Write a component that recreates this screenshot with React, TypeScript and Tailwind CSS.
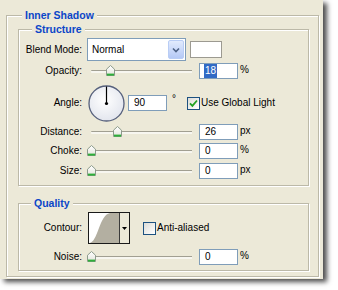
import React from "react";

const font = "font-['Liberation_Sans',Arial,sans-serif]";

const Thumb: React.FC = () => (
  <svg width="9" height="11" viewBox="0 0 9 11">
    <defs>
      <linearGradient id="tg" x1="0" y1="0" x2="0" y2="1">
        <stop offset="0" stopColor="#ffffff" />
        <stop offset="1" stopColor="#e4e4dc" />
      </linearGradient>
    </defs>
    <path d="M0.5 4.2 L4.5 0.5 L8.5 4.2 L8.5 10.5 L0.5 10.5 Z" fill="url(#tg)" stroke="#8c9a8c" />
    <rect x="1" y="8.6" width="7" height="2" fill="#2fae3a" />
  </svg>
);

const Slider: React.FC<{ at: number }> = ({ at }) => (
  <div className="relative w-[105px] h-[12px] shrink-0">
    <div className="absolute left-[4px] right-0 top-[5px] h-[3px] border-t border-[#a19f92] bg-[#f7f6f0] rounded-l-[1px]" />
    <div className="absolute top-0" style={{ left: at }}>
      <Thumb />
    </div>
  </div>
);

const Field: React.FC<{ value: string; selected?: boolean; unit?: string }> = ({ value, selected, unit }) => (
  <>
    <div className="w-[39px] h-[16px] shrink-0 border border-[#7f9db9] bg-white flex items-center pl-[4px] text-[10px] leading-[12px]">
      {selected ? (
        <span className="bg-[#316ac5] text-white px-[1px] h-[14px] leading-[14px]">{value}</span>
      ) : (
        <span className="px-[1px]">{value}</span>
      )}
    </div>
    {unit && <span className="ml-[2px] -mt-[2px] text-[10px] leading-[12px]">{unit}</span>}
  </>
);

const Label: React.FC<{ children: React.ReactNode }> = ({ children }) => (
  <span className="w-[63px] shrink-0 text-right text-[10px] leading-[12px]">{children}</span>
);

const SliderRow: React.FC<{ label: string; at: number; value: string; unit: string; selected?: boolean; className?: string }> = ({
  label,
  at,
  value,
  unit,
  selected,
  className,
}) => (
  <div className={`flex items-center h-[16px] ${className ?? ""}`}>
    <Label>{label}</Label>
    <div className="ml-[5px]">
      <Slider at={at} />
    </div>
    <div className="ml-[7px] flex items-center h-[16px]">
      <Field value={value} selected={selected} unit={unit} />
    </div>
  </div>
);

// group box caption sits on the top border line; indent is a plain spacer
const Caption: React.FC<{ children: React.ReactNode; indent: number }> = ({ children, indent }) => (
  <div className="-mt-[7px] flex h-[12px]">
    <div className="shrink-0" style={{ width: indent }} />
    <div className="px-[3px] bg-[#ece9d8] text-[10.5px] leading-[12px] font-bold text-[#0b46c8] whitespace-nowrap">{children}</div>
  </div>
);

const box = "border border-[#bcb9a8] shadow-[inset_1px_1px_0_#ffffff,1px_1px_0_#ffffff]";

export default function App() {
  return (
    <div className={`w-[338px] h-[290px] bg-white overflow-hidden text-black ${font}`}>
      <div className="w-[323px] h-[279px] bg-[#ece9d8] shadow-[4px_3px_5px_rgba(0,0,0,0.7)] pl-[6px] pt-[15px]">
        <div className={`w-[313px] h-[262px] ${box}`}>
          <Caption indent={15}>Inner Shadow</Caption>

          <div className={`mt-[8px] ml-[11px] w-[291px] h-[157px] ${box}`}>
            <Caption indent={13}>Structure</Caption>

            <div className="flex items-center h-[23px] mt-[3px]">
              <Label>Blend Mode:</Label>
              <div className="ml-[5px] w-[99px] h-[23px] border border-[#7f9db9] bg-white flex items-center p-[1px]">
                <span className="flex-1 pl-[3px] text-[10px] leading-[12px]">Normal</span>
                <div className="w-[16px] h-full rounded-[2px] border border-[#b9cdf5] bg-gradient-to-b from-[#e2ebfd] to-[#b5c9f6] flex items-center justify-center">
                  <svg width="8" height="6" viewBox="0 0 8 6">
                    <path d="M1 1.5 L4 4.5 L7 1.5" fill="none" stroke="#4d6185" strokeWidth="1.6" />
                  </svg>
                </div>
              </div>
              <div className="ml-[4px] w-[32px] h-[17px] border border-[#9c9a91] bg-white" />
            </div>

            <SliderRow className="mt-[2px]" label="Opacity:" at={19} value="18" unit="%" selected />

            <div className="flex items-center h-[38px] mt-[5px]">
              <Label>Angle:</Label>
              <div className="ml-[6px] w-[37px] h-[37px] shrink-0">
                <svg width="37" height="37" viewBox="0 0 37 37">
                  <defs>
                    <radialGradient id="dg" cx="0.45" cy="0.4" r="0.6">
                      <stop offset="0" stopColor="#ffffff" />
                      <stop offset="1" stopColor="#e3e6ee" />
                    </radialGradient>
                  </defs>
                  <circle cx="18.5" cy="18.5" r="17.5" fill="url(#dg)" stroke="#56607c" strokeWidth="1.3" />
                  <line x1="18.5" y1="18.5" x2="18.5" y2="1.5" stroke="#000" strokeWidth="1.2" />
                  <circle cx="18.5" cy="18.5" r="1.6" fill="#000" />
                </svg>
              </div>
              <div className="ml-[3px] flex items-center h-[16px]">
                <Field value="90" />
              </div>
              <span className="ml-[5px] self-start mt-[10px] text-[10px] leading-[10px]">°</span>
              <div className="ml-[11px] w-[13px] h-[13px] border border-[#1c5180] bg-gradient-to-br from-[#dcdcd7] to-white flex items-center justify-center">
                <svg width="9" height="9" viewBox="0 0 9 9">
                  <path d="M1 4.3 L3.4 6.8 L8 1.5" fill="none" stroke="#21a121" strokeWidth="1.8" />
                </svg>
              </div>
              <span className="ml-[1px] text-[10px] leading-[12px]">Use Global Light</span>
            </div>

            <SliderRow className="mt-[2px]" label="Distance:" at={26} value="26" unit="px" />
            <SliderRow className="mt-[3px]" label="Choke:" at={0} value="0" unit="%" />
            <SliderRow className="mt-[4px]" label="Size:" at={0} value="0" unit="px" />
          </div>

          <div className={`mt-[17px] ml-[11px] w-[291px] h-[68px] ${box}`}>
            <Caption indent={12}>Quality</Caption>

            <div className="flex items-center h-[32px] mt-[3px]">
              <Label>Contour:</Label>
              <div className="ml-[6px] w-[42px] h-[32px] border border-[#1a1a1a] bg-white flex">
                <svg width="30" height="30" viewBox="0 0 30 30" className="shrink-0">
                  <path d="M0 30 C 9 30, 10 2, 21 0 L 30 0 L 30 30 Z" fill="#b3afa1" />
                </svg>
                <div className="flex-1 border-l border-[#3a3a3a] bg-[#ece9d8] flex items-center justify-center">
                  <svg width="5" height="3" viewBox="0 0 5 3">
                    <path d="M0 0 H5 L2.5 3 Z" fill="#000" />
                  </svg>
                </div>
              </div>
              <div className="ml-[13px] w-[13px] h-[13px] border border-[#1c5180] bg-gradient-to-br from-[#dcdcd7] to-white" />
              <span className="ml-[1px] text-[10px] leading-[12px]">Anti-aliased</span>
            </div>

            <SliderRow className="mt-[5px]" label="Noise:" at={0} value="0" unit="%" />
          </div>
        </div>
      </div>
    </div>
  );
}
